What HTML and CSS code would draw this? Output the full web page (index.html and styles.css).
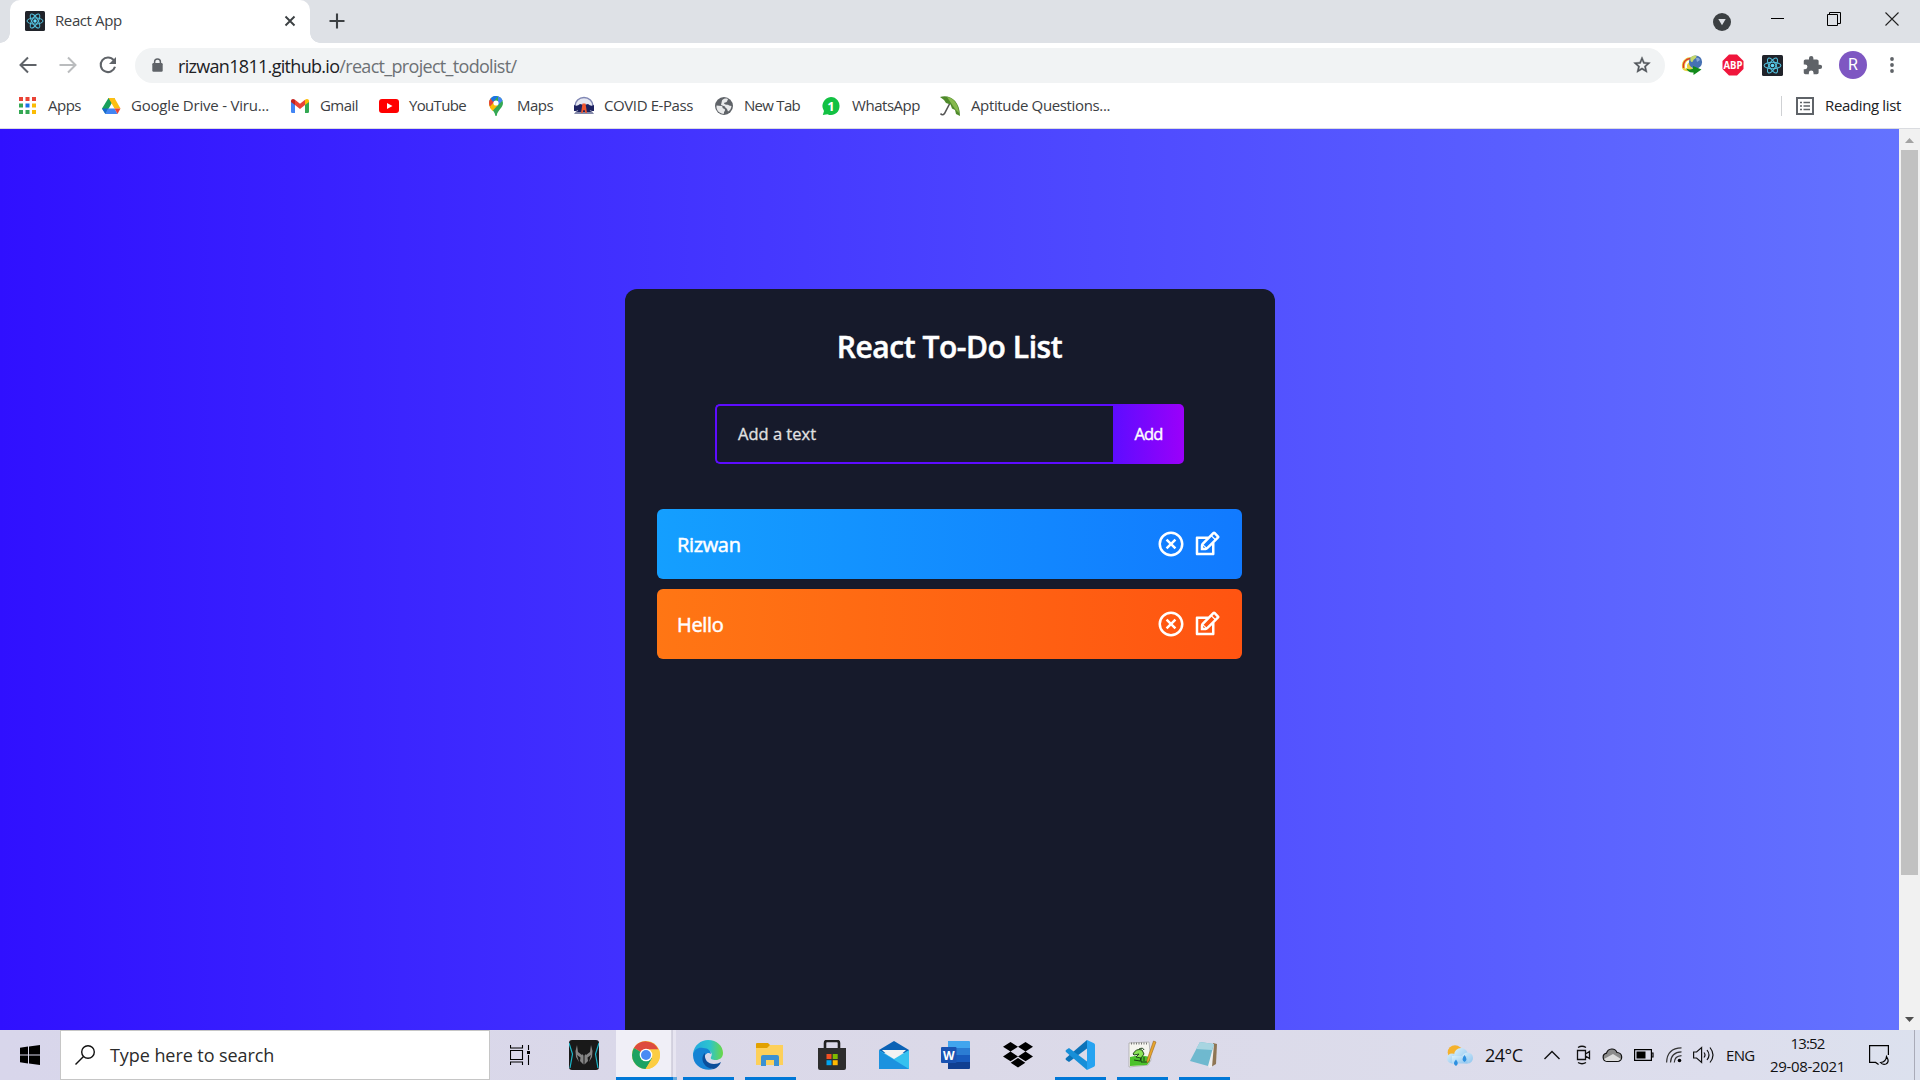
FILE: index.html
```html
<!DOCTYPE html>
<html lang="en">
<head>
<meta charset="utf-8">
<title>React App</title>
<link rel="stylesheet" href="styles.css">
</head>
<body>
<svg class="defs" width="0" height="0" aria-hidden="true">
  <defs>
    <symbol id="react" viewBox="0 0 20 20">
      <rect width="20" height="20" rx="1.5" fill="#20232a"/>
      <g fill="none" stroke="#53c1de" stroke-width="1">
        <ellipse cx="10" cy="10" rx="8" ry="3.1"/>
        <ellipse cx="10" cy="10" rx="8" ry="3.1" transform="rotate(60 10 10)"/>
        <ellipse cx="10" cy="10" rx="8" ry="3.1" transform="rotate(120 10 10)"/>
      </g>
      <circle cx="10" cy="10" r="1.7" fill="#61dafb"/>
    </symbol>
    <symbol id="remove" viewBox="0 0 24 24"><path d="M12 22C6.477 22 2 17.523 2 12S6.477 2 12 2s10 4.477 10 10-4.477 10-10 10zm0-2a8 8 0 1 0 0-16 8 8 0 0 0 0 16zm0-9.414l2.828-2.829 1.415 1.415L13.414 12l2.829 2.828-1.415 1.415L12 13.414l-2.828 2.829-1.415-1.415L10.586 12 7.757 9.172l1.415-1.415L12 10.586z"/></symbol>
    <symbol id="edit" viewBox="0 0 24 24"><path d="M21.561 5.318l-2.879-2.879c-.293-.293-.677-.439-1.061-.439-.385 0-.768.146-1.061.439l-3.56 3.561h-9c-.552 0-1 .447-1 1v13c0 .553.448 1 1 1h13c.552 0 1-.447 1-1v-9l3.561-3.561c.293-.293.439-.677.439-1.061s-.146-.767-.439-1.06zm-10.061 9.354l-2.172-2.172 6.293-6.293 2.172 2.172-6.293 6.293zm-2.561-1.339l1.756 1.728-1.695-.061-.061-1.667zm7.061 5.667h-11v-11h6l-3.18 3.18c-.293.293-.478.812-.629 1.289-.16.5-.191 1.056-.191 1.47v3.061h3.061c.414 0 1.108-.1 1.571-.29.464-.19.896-.347 1.188-.64l3.18-3.07v6zm2.500-11.328l-2.172-2.172 1.293-1.293 2.171 2.172-1.292 1.293z"/></symbol>
  </defs>
</svg>

<header class="tabstrip">
  <div class="tab">
    <svg class="favicon" width="20" height="20"><use href="#react"/></svg>
    <span class="tab-title">React App</span>
    <svg class="tab-close" width="12" height="12" viewBox="0 0 12 12"><path d="M1.5 1.5l9 9M10.5 1.5l-9 9" stroke="#3c4043" stroke-width="1.9"/></svg>
  </div>
  <svg class="new-tab" width="16" height="16" viewBox="0 0 16 16"><path d="M8 .5v15M.5 8h15" stroke="#3c4043" stroke-width="2.1"/></svg>
  <div class="window-controls">
    <svg width="18" height="18" viewBox="0 0 18 18"><circle cx="9" cy="9" r="9" fill="#3c4043"/><path d="M5.3 6h7.4L9 12.2z" fill="#dee1e6"/></svg>
    <svg width="14" height="14" viewBox="0 0 14 14"><path d="M0 6.5h13" stroke="#000"/></svg>
    <svg width="14" height="14" viewBox="0 0 14 14" fill="none" stroke="#000"><path d="M.5 2.5h10v11h-10zM2.500 2.500v-2h11v11h-3"/></svg>
    <svg width="14" height="14" viewBox="0 0 14 14"><path d="M.5.5l13 13M13.500.5l-13 13" stroke="#222" stroke-width="1.1"/></svg>
  </div>
</header>

<nav class="toolbar">
  <svg width="18" height="18" viewBox="0 0 18 18" fill="none" stroke="#5f6368" stroke-width="2"><path d="M17.500 9H2M9 1.500L1.500 9 9 16.500"/></svg>
  <svg width="18" height="18" viewBox="0 0 18 18" fill="none" stroke="#babcbe" stroke-width="2"><path d="M.5 9H16M9 1.500l7.500 7.500L9 16.500"/></svg>
  <svg class="reload" width="20" height="20" viewBox="0 0 20 20"><path d="M15.700 5.200A7.300 7.300 0 1 0 17 11.800" fill="none" stroke="#5f6368" stroke-width="2.1"/><path d="M18 2v7h-7z" fill="#5f6368"/></svg>
  <div class="address">
    <svg width="11" height="14" viewBox="0 0 11 14"><path d="M2.600 6V3.800a2.900 2.900 0 0 1 5.800 0V6" fill="none" stroke="#5f6368" stroke-width="1.500"/><rect x=".3" y="5" width="10.400" height="8.800" rx="1.200" fill="#5f6368"/></svg>
    <span class="url">rizwan1811.github.io<span class="path">/react_project_todolist/</span></span>
    <svg class="star" width="20" height="20" viewBox="0 0 24 24"><path d="M22 9.240l-7.190-.62L12 2 9.190 8.630 2 9.240l5.460 4.730L5.820 21 12 17.270 18.180 21l-1.630-7.030zM12 15.400l-3.760 2.270 1-4.280-3.320-2.880 4.380-.38L12 6.100l1.710 4.040 4.380.38-3.320 2.880 1 4.280z" fill="#50545a" stroke="#50545a" stroke-width=".5"/></svg>
  </div>
  <div class="extensions">
    <svg width="22" height="22" viewBox="0 0 22 22"><path d="M1 13C0 6 6 3 10 3c-2 4-2 8 2 12-5 4-11 2-11-2z" fill="#e8d23e"/><path d="M2.500 14c-1-6 2.500-9 6.500-9.500" fill="none" stroke="#e0352b" stroke-width="1.300"/><path d="M5.300 14.500c-1-4 .5-6.500 3.200-7.500" fill="none" stroke="#fff" stroke-width="2"/><circle cx="14.500" cy="8" r="6.600" fill="#4671b3"/><path d="M9.500 4c2-3.500 7-3 6-1s-3 2-3.500 4-3.500 1-2.500-3z" fill="#c5d86a"/><path d="M15 4q3-1 4 2l-3 2z" fill="#87a7d6"/><path d="M5 14c2 2 5 1.500 7 .5V12l8.500 3.500L12.500 21v-2.500C9 19 6 17 5 14z" fill="#128a1b"/></svg>
    <svg class="ext-abp" width="22" height="22" viewBox="0 0 22 22"><path d="M7 .5h8l6.500 6.500v8L15 21.500H7L.5 15V7z" fill="#f0163c"/><text x="11" y="15" text-anchor="middle" class="abp" textLength="19" lengthAdjust="spacingAndGlyphs">ABP</text></svg>
    <svg class="ext-react" width="21" height="21"><use href="#react"/></svg>
    <svg class="ext-puzzle" width="21" height="21" viewBox="0 0 24 24"><path d="M20.500 11H19V7c0-1.100-.9-2-2-2h-4V3.500a2.500 2.500 0 0 0-5 0V5H4c-1.100 0-1.990.9-1.990 2v3.800H3.500a2.700 2.700 0 0 1 0 5.400H2V20c0 1.100.9 2 2 2h3.800v-1.500a2.700 2.700 0 0 1 5.400 0V22H17c1.100 0 2-.9 2-2v-4h1.500a2.500 2.500 0 0 0 0-5z" fill="#5f6368"/></svg>
    <span class="avatar">R</span>
    <svg class="menu" width="4" height="18" viewBox="0 0 4 18" fill="#5f6368"><circle cx="2" cy="3" r="1.900"/><circle cx="2" cy="9" r="1.900"/><circle cx="2" cy="15" r="1.900"/></svg>
  </div>
</nav>

<nav class="bookmarks">
  <div class="bookmark"><svg width="20" height="20" viewBox="0 0 20 20"><g fill="#ea4335"><path d="M0 1h4v4H0zM6.500 1h4v4h-4zM13 1h4v4h-4z"/></g><path d="M0 7.500h4v4H0zM0 14h4v4H0zM6.500 14h4v4h-4z" fill="#34a853"/><path d="M6.500 7.500h4v4h-4z" fill="#1a73e8"/><path d="M13 7.500h4v4h-4zM13 14h4v4h-4z" fill="#fbbc04"/></svg><span class="bm-apps">Apps</span></div>
  <div class="bookmark"><svg width="20" height="20" viewBox="0 0 20 20"><path d="M6.500 2h6l-3 5.500L3.600 18 0 12.500z" fill="#18a05c"/><path d="M6.500 2h6L9.500 7.500z" fill="#0b7a3e"/><path d="M6.500 2h6L18.500 12.500h-6z" fill="#fdbf12"/><path d="M0 12.500h6L3.300 18z" fill="#1967d2"/><path d="M6 12.500h6.500L15.500 18H3.300z" fill="#4285f4"/><path d="M12.500 12.500h6L15.500 18z" fill="#ea4335"/></svg><span class="bm-drive">Google Drive - Viru...</span></div>
  <div class="bookmark"><svg width="20" height="20" viewBox="0 0 20 20"><path d="M0 5l4 3v9H1.200Q0 17 0 15.800z" fill="#4285f4"/><path d="M18 5l-4 3v9h2.800q1.200 0 1.200-1.200z" fill="#34a853"/><path d="M4 3.800l5 3.900 5-3.900V9l-5 4-5-4z" fill="#ea4335"/><path d="M0 5c0-2 2.200-2.800 4-1.200V9L0 6z" fill="#c5221f"/><path d="M18 5c0-2-2.200-2.800-4-1.200V9l4-3z" fill="#fbbc04"/></svg><span class="bm-gmail">Gmail</span></div>
  <div class="bookmark"><svg width="20" height="20" viewBox="0 0 20 20"><rect y="3" width="20" height="14" rx="3" fill="#f00"/><path d="M8 7l5.500 3L8 13z" fill="#fff"/></svg><span class="bm-youtube">YouTube</span></div>
  <div class="bookmark"><svg width="20" height="20" viewBox="0 0 20 20"><path d="M7 0a7 7 0 0 1 7 7c0 5-5.500 7-6.200 12.500Q7 20.500 6.300 19.500C5.500 14 0 12 0 7a7 7 0 0 1 7-7z" fill="#34a853"/><path d="M7 7l-5.200 6Q0 10 0 7l1.600-4.500z" fill="#fbbc04"/><path d="M7 7L1.600 11.500Q0 9.500 0 7q0-2.500 1.600-4.500z" fill="#ea4335"/><path d="M1.600 2.500A7 7 0 0 1 9 .3L4 6z" fill="#1a73e8"/><path d="M9 .3q3.500 1 4.600 4.200L9 9z" fill="#4285f4"/><path d="M1 10.500L5 6l4 3-5.500 6Q1.500 12.500 1 10.500z" fill="#fbbc04"/><circle cx="7" cy="7" r="2.600" fill="#fff"/></svg><span class="bm-maps">Maps</span></div>
  <div class="bookmark"><svg width="20" height="20" viewBox="0 0 20 20"><path d="M1 10a9 8.500 0 0 1 18 0" fill="#e6e8f2" stroke="#7f86b3" stroke-width="1.500"/><path d="M0 9q3 2 6-1l4 1 4-1q3 3 6 1v6H0z" fill="#1d2260"/><path d="M0 18l3-4h14l3 4z" fill="#8388a8"/><path d="M3 16l2-3h10l2 3z" fill="#1d2260"/><path d="M7 17l1.500-9.500h3L13 17h-1.500l-1-3h-1l-1 3z" fill="#f0562e"/></svg><span class="bm-covid">COVID E-Pass</span></div>
  <div class="bookmark"><svg width="20" height="20" viewBox="0 0 20 20"><circle cx="9" cy="10" r="9" fill="#5f6368"/><path d="M1.500 9.500l5 .5c2 .5 0 2 2 2.500s2 2 .5 3.500v1.800c-4 0-8-3-7.500-8.300zM7 4.500c1.500-2 4-2.300 6-1.500l-1 2.500c-1 1.500-3 .5-3 2 1.500 2 4 .5 5 2l2.500.5c-.3 3-2 5-3.500 5.500l-1-2.500c-1-1-2-1.200-2-2.500L6 9z" fill="#e9eaeb"/></svg><span class="bm-newtab">New Tab</span></div>
  <div class="bookmark"><svg width="20" height="20" viewBox="0 0 20 20"><path d="M9 1a8.500 9 0 1 1-3.500 17.200L.8 19 2 15A9 9 0 0 1 9 1z" fill="#12c143"/><text x="9" y="15" text-anchor="middle" class="wa-count">1</text></svg><span class="bm-whatsapp">WhatsApp</span></div>
  <div class="bookmark"><svg width="20" height="20" viewBox="0 0 20 20"><path d="M10 7L4.500 17.500q-2 2.500-4 0" fill="none" stroke="#555" stroke-width="1.600"/><path d="M0 1c9-3 20 3 20 19l-4-2-1-4-3-1.500-1.500-4-4.500-1.500-2-3z" fill="#4f8a2b"/><path d="M7 1c6 1 11 6 12 16l-4-4-4-6z" fill="#86b94d"/></svg><span class="bm-aptitude">Aptitude Questions...</span></div>
  <div class="reading">
    <svg width="18" height="18" viewBox="0 0 18 18" fill="none" stroke="#5f6368"><rect x="1" y="1" width="16" height="16" stroke-width="2"/><path d="M4 5.500h2M7.500 5.500h6.500M4 9h2M7.500 9h6.500M4 12.500h2M7.500 12.500h6.500" stroke-width="1.500"/></svg>
    <span>Reading list</span>
  </div>
</nav>

<main class="viewport">
  <div class="page">
    <section class="todo-app">
      <h1>React To-Do List</h1>
      <form class="todo-form">
        <div class="todo-input">Add a text</div>
        <div class="todo-button">Add</div>
      </form>
      <div class="todo-row blue"><span>Rizwan</span><div class="icons"><svg width="30" height="30"><use href="#remove"/></svg><svg width="30" height="30"><use href="#edit"/></svg></div></div>
      <div class="todo-row orange"><span>Hello</span><div class="icons"><svg width="30" height="30"><use href="#remove"/></svg><svg width="30" height="30"><use href="#edit"/></svg></div></div>
    </section>
  </div>
  <div class="scrollbar">
    <svg width="21" height="21" viewBox="0 0 21 21"><path d="M6 14l4.500-5 4.500 5z" fill="#a3a3a3"/></svg>
    <div class="thumb"></div>
    <svg width="21" height="21" viewBox="0 0 21 21"><path d="M6 8h9l-4.500 5z" fill="#505050"/></svg>
  </div>
</main>

<footer class="taskbar">
  <div class="start"><svg width="20" height="20" viewBox="0 0 20 20"><path d="M0 2.800L8 1.600v7.800H0zM9 1.500L20 0v9.400H9zM0 10.500h8v7.900l-8-1.200zM9 10.500h11V20L9 18.500z"/></svg></div>
  <div class="search"><svg width="20" height="20" viewBox="0 0 20 20" fill="none" stroke="#111" stroke-width="1.400"><circle cx="13" cy="7" r="6.300"/><path d="M8.500 11.500L.5 19.500"/></svg><span>Type here to search</span></div>
  <div class="taskview"><svg width="20" height="20" viewBox="0 0 20 20" fill="none" stroke="#000" stroke-width="1.100"><path d="M.5 5.500h12v9H.5zM.5 0v3h12V0M.5 20v-3h12v3M18.500 0v5M18.500 10v10"/><path d="M17 6h3v3h-3z" fill="#000" stroke="none"/></svg></div>
  <div class="apps">
    <div class="app"><svg width="30" height="30" viewBox="0 0 30 30"><rect width="30" height="30" rx="3" fill="#191919"/><path d="M0 3l3.500 11L1 28M30 3l-3.500 11L29 28" fill="none" stroke="#1bb6c9" stroke-width="1.200"/><g fill="#858585"><path d="M8 5l1 7 4 3v-1l1.500 1.500v9L11 21l.5-3.500L8 15l2 7-3-5-.5-6z"/><path d="M22 5l-1 7-4 3v-1l-1.500 1.500v9L19 21l-.5-3.500L22 15l-2 7 3-5 .5-6z"/></g></svg></div>
    <div class="app active"><svg width="28" height="28" viewBox="0 0 28 28"><circle cx="14" cy="14" r="14" fill="#fbca3e"/><path d="M14 14L1.900 7A14 14 0 0 1 26.500 8.500H14z" fill="#dd4b3e"/><path d="M14 14L1.900 7A14 14 0 0 0 13.600 28L20 17.500z" fill="#1da362"/><path d="M14 8.500h12.800A14 14 0 0 1 13.600 28L20 17.500z" fill="#fccd43"/><circle cx="14" cy="14" r="6.300" fill="#fff"/><circle cx="14" cy="14" r="5" fill="#4a8af4"/></svg></div>
    <div class="app open"><svg width="30" height="30" viewBox="0 0 30 30"><defs><linearGradient id="eg" x1="0" x2="1"><stop stop-color="#23a9e0"/><stop offset=".55" stop-color="#2cc3cf"/><stop offset="1" stop-color="#6bd845"/></linearGradient></defs><path d="M0 14C1 5 8 0 15 0c9 0 15 6 15 13 0 5-4 7-7 7-4 0-6-1-5-3 2-3 0-7-5-7C7 9 1 12 0 16z" fill="url(#eg)"/><path d="M0 15c1-6 6-8 10-7 5 0 8 3 8 6-4-3-8 2-6 7 1 5 6 8 9 8C11 32 0 26 0 15z" fill="#1683d4"/><path d="M12 13c-5 4-3 15 9 16 3-1 6-4 7-7-2 1-4 2-7 2-6 0-10-4-9-11z" fill="#0c4f9b"/></svg></div>
    <div class="app open"><svg width="28" height="24" viewBox="0 0 28 24"><path d="M0 1Q0 0 1 0h11l2 2v4H0z" fill="#e2a100"/><path d="M0 5h11l3-3h13v20H0z" fill="#fdd05a"/><path d="M5 23v-9q0-2 2-2h14q2 0 2 2v9h-5v-6h-8v6z" fill="#3c91d3"/></svg></div>
    <div class="app"><svg width="30" height="30" viewBox="0 0 30 30"><path d="M8 9V3q0-2 2-2h10q2 0 2 2v6" fill="none" stroke="#222" stroke-width="2.600"/><path d="M1 8h28v20q0 2-2 2H3q-2 0-2-2z" fill="#2d2d2d"/><path d="M9.500 14h5v5h-5z" fill="#f25022"/><path d="M15.700 14h5v5h-5z" fill="#7fba00"/><path d="M9.500 20.200h5v5h-5z" fill="#00a4ef"/><path d="M15.700 20.200h5v5h-5z" fill="#ffb900"/></svg></div>
    <div class="app"><svg width="30" height="28" viewBox="0 0 30 28"><path d="M0 9L15 0l15 9v3H0z" fill="#0b62b5"/><path d="M3 9h24L15 20z" fill="#f3f3f3"/><path d="M0 9l15 9 15-9v19H0z" fill="#36c1ef"/><path d="M0 9.500L30 28H0z" fill="#1c92df"/></svg></div>
    <div class="app"><svg width="30" height="28" viewBox="0 0 30 28"><path d="M7 0h21q1 0 1 1v6H7z" fill="#41a5ee"/><path d="M7 7h22v7H7z" fill="#2b7cd3"/><path d="M7 14h22v7H7z" fill="#185abd"/><path d="M7 21h22v6q0 1-1 1H7z" fill="#103f91"/><rect y="6" width="15.500" height="16" rx="1" fill="#1a53b2"/><text x="7.700" y="18.500" text-anchor="middle" class="word-w">W</text></svg></div>
    <div class="app"><svg width="30" height="26" viewBox="0 0 30 26"><path d="M7.500 0L15 4.800 7.500 9.600 0 4.800zM22.500 0L30 4.800l-7.500 4.800L15 4.800zM7.500 9.600L15 14.400l-7.500 4.800L0 14.400zM22.500 9.600l7.500 4.800-7.500 4.800-7.500-4.800zM15 16l7.300 4.700L15 25.500l-7.300-4.800z"/></svg></div>
    <div class="app open"><svg width="30" height="30" viewBox="0 0 30 30"><path d="M22 0v8.500L4 22l-3-2q-1-1 0-2z" fill="#0b72b8"/><path d="M22 30v-8.500L4 8 1 10q-1 1 0 2z" fill="#178fd8"/><path d="M22 0l7 3.200q1 .6 1 1.800v20q0 1.200-1 1.800L22 30z" fill="#26a3f1"/></svg></div>
    <div class="app open"><svg width="30" height="30" viewBox="0 0 30 30"><path d="M2 3l20-1 2 18-3 5-19 2z" fill="#f5f5ef" stroke="#aaa" stroke-width=".8"/><path d="M3 17q10-3 20 0v4l-3 4-17 1z" fill="#4cc22b"/><path d="M4 3.500h17" stroke="#777" stroke-width="2" stroke-dasharray="1 1.500"/><path d="M6 14q3-6 9-4l2 4-3 4-5-1 3-3-5 1z" fill="#8be356" stroke="#183d14" stroke-width=".9"/><path d="M12 9q4-2 5 1M7 20l6 1 1-3v4h6M17 17v4" fill="none" stroke="#183d14"/><path d="M26.500 1l2.500 1-7 19-2 2v-3z" fill="#e9a62c" stroke="#9a641d" stroke-width=".6"/></svg></div>
    <div class="app open"><svg width="30" height="28" viewBox="0 0 30 28"><path d="M24 2l4 1-1 20-5 3z" fill="#8f7654"/><path d="M11 2l14 1-2 23-3 1z" fill="#eee"/><path d="M11 1l14 2-6 22L1 20z" fill="#6fb9cf"/><path d="M11 1l14 2-2 6L7 8z" fill="#a8d5e1"/></svg></div>
  </div>
  <div class="tray">
    <svg class="weather" width="26" height="21" viewBox="0 0 26 21"><defs><linearGradient id="cl" x1="0" y1="0" x2="1" y2="1"><stop stop-color="#d8f0fc"/><stop offset="1" stop-color="#8ec4ee"/></linearGradient></defs><circle cx="8" cy="7.500" r="7.300" fill="#f5b12c"/><g fill="url(#cl)"><circle cx="5" cy="13.500" r="5"/><circle cx="14" cy="10" r="7"/><circle cx="20.500" cy="13" r="5.500"/><rect x="5" y="11" width="15.500" height="7.500"/></g><path d="M9 14.500q3.500 4.500 0 6.500-4-2 0-6.500zM17.500 10q4 5 0 7-4-2 0-7z" fill="#2e90e0"/></svg>
    <span class="temp">24°C</span>
    <svg class="chev" width="16" height="10" viewBox="0 0 16 10"><path d="M.5 9L8 1.500 15.500 9" fill="none" stroke="#111" stroke-width="1.400"/></svg>
    <svg class="meet" width="15" height="20" viewBox="0 0 15 20" fill="none" stroke="#111" stroke-width="1.300"><path d="M1.500 5.500h8v9h-8zM9.500 9l4-2.500v7l-4-2.500M2 2.500q4-2.500 8 0M2 17.500q4 2.500 8 0"/></svg>
    <svg class="cloud" width="21" height="16" viewBox="0 0 21 16"><path d="M5 14.500a4.200 4.200 0 0 1-.5-8.300C6 1 13 .5 15 5.500c6 0 6.500 9 0 9z" fill="#8b8b8b" stroke="#111" stroke-width="1.200"/><path d="M2 12l9-5 8 5-3 2H4z" fill="#ddd"/></svg>
    <svg class="battery" width="20" height="12" viewBox="0 0 20 12"><path d="M.6.6h16.800v10.800H.6zM17.400 4h1.600v4h-1.600" fill="none" stroke="#000" stroke-width="1.200"/><path d="M2.500 2.500h9v7h-9z"/></svg>
    <svg class="wifi" width="16" height="16" viewBox="0 0 16 16" fill="none" stroke="#333" stroke-width="1.200"><path d="M.6 15.500Q1 1 15.500.8M4.500 15.500Q5 5 15.500 4.800M8.300 15.500Q8.500 9 15.500 8.600"/><circle cx="13.500" cy="13.500" r="1.800" fill="#000" stroke="none"/></svg>
    <svg class="volume" width="21" height="18" viewBox="0 0 21 18" fill="none" stroke="#111" stroke-width="1.200"><path d="M.6 6h3l5-4.500v15L3.600 12h-3zM11 6.500q2 2.500 0 5M14 4q4 5 0 10M17 1.500q6 7.500 0 15"/></svg>
    <span class="lang">ENG</span>
    <div class="clock"><span class="time">13:52</span><span class="date">29-08-2021</span></div>
    <svg class="notify" width="20" height="20" viewBox="0 0 20 20" fill="none" stroke="#000" stroke-width="1.200"><path d="M19.400 10V.6H.6v16.800h6l3 2"/><path d="M17.500 11.500q-.5 5.500-6 6 2 2.500 5.500 1.500 4-2 .5-7.500z"/></svg>
  </div>
  <div class="show-desktop"></div>
</footer>
</body>
</html>
```
FILE: styles.css
```css
* { box-sizing: border-box; }

body {
  margin: 0;
  width: 1920px;
  height: 1080px;
  overflow: hidden;
  display: flex;
  flex-direction: column;
  background: #fff;
  font-family: "Open Sans", "Noto Sans", sans-serif;
  font-size: 15px;
  color: #3c4043;
  white-space: nowrap;
}

svg { display: block; flex: none; }
.defs { position: absolute; }

/* Tab strip */
.tabstrip {
  height: 43px;
  flex: none;
  display: flex;
  background: #dee1e6;
}
.tab {
  position: relative;
  width: 300px;
  margin-left: 10px;
  padding: 0 14px 1px 15px;
  display: flex;
  align-items: center;
  background: #fff;
  border-radius: 10px 10px 0 0;
}
.tab::before,
.tab::after {
  content: "";
  position: absolute;
  bottom: 0;
  width: 10px;
  height: 10px;
}
.tab::before { left: -10px; background: radial-gradient(circle at 0 0, transparent 9.5px, #fff 10px); }
.tab::after { right: -10px; background: radial-gradient(circle at 100% 0, transparent 9.5px, #fff 10px); }
.tab-title { margin-left: 10px; padding-bottom: 2px; letter-spacing: -0.4px; }
.tab-close { margin-left: auto; }
.new-tab { margin: 13px 0 0 19px; }
.window-controls {
  margin-left: auto;
  padding: 12px 21px 0 0;
  display: flex;
  gap: 43px;
}
.window-controls svg:first-child { margin: 1px -3px 0 0; }
.window-controls svg:nth-child(3) { margin: 0 1px 0 -1px; }

/* Toolbar */
.toolbar {
  height: 44px;
  flex: none;
  display: flex;
  align-items: center;
  padding: 0 24px 0 19px;
  gap: 22px;
}
.reload { margin-left: -1px; }
.address {
  width: 1530px;
  height: 35px;
  margin-left: -5px;
  padding: 0 13px 0 17px;
  border-radius: 18px;
  background: #f1f3f4;
  display: flex;
  align-items: center;
}
.url { margin-left: 15px; padding-top: 1px; font-size: 18px; letter-spacing: -0.69px; color: #202124; }
.path { color: #6d7175; }
.star { margin-left: auto; }
.extensions {
  flex: 1;
  margin-left: -6px;
  display: flex;
  align-items: center;
}
.ext-abp { margin-left: 19px; }
.ext-react { margin-left: 18px; }
.ext-puzzle { margin-left: 19px; }
.abp { font: bold 11px "Open Sans", sans-serif; fill: #fff; }
.avatar {
  width: 28px;
  height: 28px;
  margin-left: 16px;
  border-radius: 50%;
  background: #7e57c2;
  color: #fff;
  font: 16px/28px Roboto, sans-serif;
  text-align: center;
}
.menu { margin-left: 23px; }

/* Bookmarks bar */
.bookmarks {
  height: 42px;
  flex: none;
  padding: 0 19px 4px 19px;
  display: grid;
  grid-template-columns: 83px 189px 88px 110px 85px 141px 107px 118px 1fr auto;
  align-items: center;
  border-bottom: 1px solid #dadce0;
}
.bookmark { display: flex; align-items: center; gap: 10px; }
.bookmark span { padding-bottom: 1px; }
.bm-apps { margin-left: -1px; letter-spacing: -0.5px; }
.bm-drive { margin-left: -1px; letter-spacing: -0.2px; }
.bm-gmail { margin-left: -1px; letter-spacing: -0.54px; }
.bm-youtube { letter-spacing: -0.67px; }
.bm-maps { margin-left: -2px; letter-spacing: -0.54px; }
.bm-covid { letter-spacing: -0.4px; }
.bm-newtab { margin-left: -1px; letter-spacing: -0.72px; }
.bm-whatsapp { letter-spacing: -0.46px; }
.bm-aptitude { margin-left: 1px; letter-spacing: -0.36px; }
.reading {
  height: 20px;
  padding-left: 14px;
  border-left: 1px solid #cfd1d4;
  display: flex;
  align-items: center;
  gap: 11px;
  color: #202124;
}
.reading span { padding-bottom: 1px; letter-spacing: -0.36px; }
.wa-count { font: bold 13px "Open Sans", sans-serif; fill: #fff; }

/* Web page */
.viewport { flex: 1; min-height: 0; display: flex; }
.page {
  flex: 1;
  overflow: hidden;
  background: linear-gradient(90deg, #3010ff 0%, #6473ff 100%);
}
.todo-app {
  width: 650px;
  height: 760px;
  margin: 160px auto 0;
  padding-top: 1px;
  border-radius: 12px;
  background: #161a2b;
  color: #fff;
}
.todo-app h1 {
  margin: 39px 0 0;
  font-size: 30px;
  line-height: 36px;
  font-weight: 600;
  letter-spacing: -0.45px;
  -webkit-text-stroke: 0.5px;
  text-align: center;
}
.todo-form { margin: 39px 0 45px; height: 60px; display: flex; justify-content: center; }
.todo-input {
  width: 398px;
  padding-left: 21px;
  border: 2px solid #5d0cff;
  border-right: 0;
  border-radius: 5px 0 0 5px;
  font-size: 16.500px;
  -webkit-text-stroke: 0.3px;
  line-height: 56px;
  color: #e2e2e2;
}
.todo-button {
  width: 71px;
  border-radius: 0 5px 5px 0;
  background: linear-gradient(90deg, #5d0cff 0%, #9b00fa 100%);
  font-size: 16.500px;
  -webkit-text-stroke: 0.4px;
  letter-spacing: -0.8px;
  line-height: 60px;
  text-align: center;
}
.todo-row {
  width: 585px;
  height: 70px;
  margin: 0 auto 10px;
  padding: 0 20px;
  border-radius: 6px;
  display: flex;
  align-items: center;
  justify-content: space-between;
  font-size: 20px;
  letter-spacing: -0.35px;
}
.todo-row span { padding-top: 1px; -webkit-text-stroke: 0.5px; }
.todo-row.blue { background: linear-gradient(90deg, #149fff 0%, #117aff 100%); }
.todo-row.orange { background: linear-gradient(90deg, #ff7614 0%, #ff5411 100%); }
.icons { display: flex; gap: 6px; fill: #fff; }
.scrollbar {
  width: 21px;
  background: #f1f1f1;
  display: flex;
  flex-direction: column;
}
.scrollbar svg:last-child { margin-top: auto; }
.thumb { width: 17px; height: 725px; margin-left: 2px; background: #c1c1c1; }

/* Taskbar */
.taskbar {
  height: 50px;
  flex: none;
  display: flex;
  background: linear-gradient(90deg, #d8d6eb, #dbd9e8 50%, #dddeed 90%, #dce1ee);
  color: #111;
}
.start { width: 60px; display: grid; place-items: center; }
.search {
  width: 430px;
  padding: 0 14px;
  display: flex;
  align-items: center;
  gap: 15px;
  border: 1px solid #c6c6c6;
  background: #fff;
  font-size: 18px;
  letter-spacing: -0.07px;
  color: #2b2b2b;
}
.taskview { width: 60px; display: grid; place-items: center; }
.apps { display: flex; margin-left: 3px; }
.app {
  width: 62px;
  height: 50px;
  display: grid;
  place-items: center;
  position: relative;
}
.app.open::after,
.app.active::after {
  content: "";
  position: absolute;
  bottom: 0;
  left: 6px;
  width: 51px;
  height: 3px;
  background: #0078d7;
}
.app.active { background: linear-gradient(90deg, transparent 1px, #f0eff7 1px, #f0eff7 56px, #bcbacb 57px, #e7e5f1 58px, #e7e5f1 61px, transparent 61px); }
.app.active::after { left: 1px; width: 61px; background: linear-gradient(90deg, #0078d7 57px, #67a9dd 57px); }
.word-w { font: bold 12px "Open Sans", sans-serif; fill: #fff; }
.tray { margin-left: auto; display: flex; align-items: center; }
.temp { margin-left: 12px; width: 37px; font-size: 18px; letter-spacing: -0.5px; }
.chev { margin-left: 22px; }
.meet { margin-left: 16px; }
.cloud { margin-left: 11px; }
.battery { margin-left: 11px; }
.wifi { margin-left: 12px; }
.volume { margin-left: 11px; }
.lang { margin-left: 12px; width: 28px; letter-spacing: -0.7px; }
.clock {
  width: 75px;
  margin-left: 16px;
  display: flex;
  flex-direction: column;
  align-items: center;
  line-height: 23px;
}
.time { letter-spacing: -0.85px; }
.date { letter-spacing: -0.33px; }
.notify { margin-left: 24px; }
.show-desktop { width: 6px; margin-left: 25px; border-left: 1px solid #a9abb8; }
```
